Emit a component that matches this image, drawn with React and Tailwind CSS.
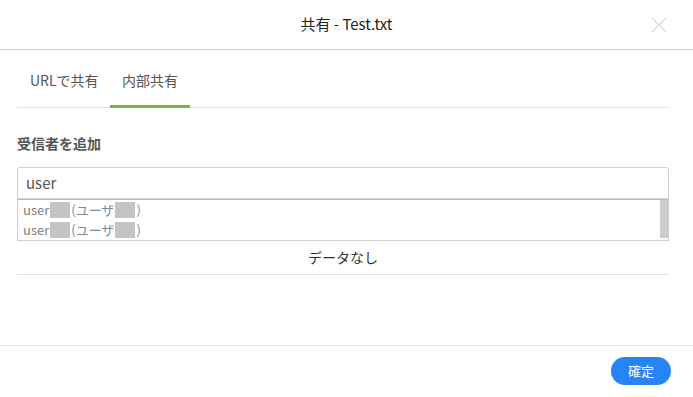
import React from 'react';

const font = { fontFamily: '"Noto Sans CJK JP", "Noto Sans", sans-serif' };

function Block() {
  return <span className="inline-block w-[20px] h-[16px] bg-[#c4c4c4] align-middle mx-[1px]"></span>;
}

function UserItem() {
  return (
    <div className="h-[20px] flex items-center text-[13px] leading-[20px]">
      <span className="text-[#808080]">user</span>
      <Block />
      <span className="text-[#7d8a9c]">(ユーザ</span>
      <Block />
      <span className="text-[#7d8a9c]">)</span>
    </div>
  );
}

export default function App() {
  return (
    <div className="w-[693px] h-[397px] bg-white flex flex-col" style={font}>
      {/* Header */}
      <div className="relative h-[50px] shrink-0 border-b border-[#cfcfcf] flex items-center justify-center">
        <span className="text-[15px] text-[#222]">共有 - Test.txt</span>
        <svg className="absolute right-[26px] top-[17px]" width="16" height="16" viewBox="0 0 16 16">
          <path d="M1 1 L15 15 M15 1 L1 15" stroke="#dcdcdc" strokeWidth="1.3" />
        </svg>
      </div>

      {/* Body */}
      <div className="flex-1 px-[17px] pr-[24px]">
        <div className="flex h-[58px] border-b border-[#e2e2e2]">
          <div className="w-[93px] pl-[13px] flex items-center text-[14px] text-[#555] pt-[4px]">URLで共有</div>
          <div className="relative w-[80px] px-[12px] flex items-center text-[14px] text-[#555] pt-[4px]">
            内部共有
            <span className="absolute left-0 right-0 bottom-[-1px] h-[3px] bg-[#7cb342]"></span>
          </div>
        </div>

        <div className="mt-[25px] text-[14px] leading-[20px] font-bold text-[#555]">受信者を追加</div>

        <div className="mt-[14px] h-[32px] border border-[#cfcfcf] rounded-t-[3px] flex items-center px-[8px] text-[15px] text-[#555]">
          user
        </div>
        <div className="relative h-[42px] border border-t-[#bdbdbd] border-[#cfcfcf] pl-[5px]">
          <UserItem />
          <UserItem />
          <span className="absolute right-0 top-0 w-[8px] h-[38px] bg-[#cccccc]"></span>
        </div>

        <div className="h-[34px] border-b border-[#e2e2e2] flex items-center justify-center text-[14px] text-[#333]">
          データなし
        </div>
      </div>

      {/* Footer */}
      <div className="h-[52px] shrink-0 border-t border-[#e5e5e5] flex items-start justify-end pt-[11px] pr-[22px]">
        <button className="h-[28px] w-[60px] rounded-full bg-[#2684f7] text-white text-[13px] flex items-center justify-center">
          確定
        </button>
      </div>
    </div>
  );
}
